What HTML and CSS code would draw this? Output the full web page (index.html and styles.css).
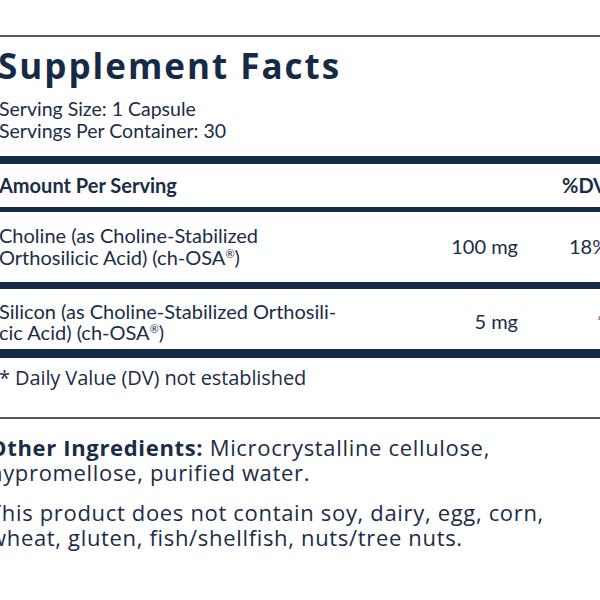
FILE: index.html
```html
<!DOCTYPE html>
<html lang="en">
<head>
<meta charset="utf-8">
<title>Supplement Facts</title>
<link rel="stylesheet" href="styles.css">
</head>
<body>
<div class="panel">
  <div class="rule"></div>
  <h1 class="title">Supplement Facts</h1>
  <div class="serving">
    <div>Serving Size: 1 Capsule</div>
    <div>Servings Per Container: 30</div>
  </div>
  <div class="bar bar-thick"></div>
  <div class="row head">
    <div class="name">Amount Per Serving</div>
    <div class="amt"></div>
    <div class="dv dv-head">%DV</div>
  </div>
  <div class="bar bar-thin"></div>
  <div class="row item choline">
    <div class="name">Choline (as Choline-Stabilized<br>Orthosilicic Acid) (ch-OSA<sup>®</sup>)</div>
    <div class="amt">100 mg</div>
    <div class="dv dv-val">18%</div>
  </div>
  <div class="bar bar-mid"></div>
  <div class="row item silicon">
    <div class="name">Silicon (as Choline-Stabilized Orthosili-<br>cic Acid) (ch-OSA<sup>®</sup>)</div>
    <div class="amt">5 mg</div>
    <div class="dv dv-star">*</div>
  </div>
  <div class="bar bar-thick2"></div>
  <p class="footnote">* Daily Value (DV) not established</p>
  <div class="rule rule-lower"></div>
  <div class="notes">
    <p class="para"><b>Other Ingredients:</b> Microcrystalline cellulose,<br>hypromellose, purified water.</p>
    <p class="para para-2">This product does not contain soy, dairy, egg, corn,<br>wheat, gluten, fish/shellfish, nuts/tree nuts.</p>
  </div>
</div>
</body>
</html>
```
FILE: styles.css
```css
html, body {
  margin: 0;
  padding: 0;
  background: #ffffff;
  overflow: hidden;
}
body {
  width: 600px;
  height: 600px;
  color: #1b2c46;
  font-family: Lato, "Open Sans", sans-serif;
}
.panel {
  width: 640px;
  margin-left: -1px;
  padding-top: 35px;
}
.rule {
  height: 2px;
  background: #4f5a69;
}
.title {
  margin: 7px 0 0 -1px;
  font-family: "Open Sans", sans-serif;
  font-weight: 700;
  font-size: 35px;
  line-height: 44px;
  letter-spacing: 2px;
  color: #172a45;
}
.serving {
  margin-top: 10px;
  font-size: 19.5px;
  line-height: 21.7px;
}
.bar { background: #142a47; }
.bar-thick { height: 8px; margin-top: 15px; }
.bar-thin { height: 5px; }
.bar-mid { height: 7px; }
.bar-thick2 { height: 9px; }
.row {
  display: grid;
  grid-template-columns: 439px 80px 1fr;
  align-items: center;
}
.head {
  font-weight: 700;
  font-size: 20px;
  line-height: 24px;
  padding: 9px 0 10px;
}
.item {
  font-size: 20px;
  line-height: 21.7px;
}
.choline { padding: 13px 0 13px; }
.silicon { padding: 12px 0 6px; line-height: 21px; }
.amt { text-align: right; }
.dv { padding-left: 44px; }
.dv-val { padding-left: 51px; }
.dv-star { padding-left: 79px; }
sup {
  font-size: 0.55em;
  line-height: 0;
  vertical-align: 0.6em;
}
.footnote {
  margin: 8px 0 0;
  font-family: "Open Sans", sans-serif;
  font-size: 20px;
  line-height: 24px;
  letter-spacing: -0.1px;
}
.rule-lower { margin-top: 27px; }
.notes {
  margin-left: -10px;
  padding-top: 16px;
  font-family: "Open Sans", sans-serif;
  font-size: 22px;
  line-height: 25px;
  letter-spacing: 0.67px;
}
.para { margin: 0; }
.para b { font-weight: 700; }
.para-2 { margin-top: 15px; }
```
